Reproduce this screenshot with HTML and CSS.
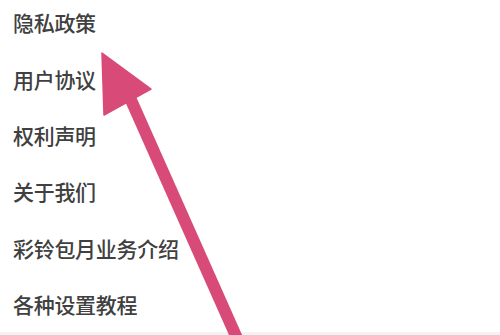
FILE: index.html
```html
<!DOCTYPE html>
<html lang="zh">
<head>
<meta charset="utf-8">
<link rel="stylesheet" href="styles.css">
</head>
<body>
<div class="page">
  <ul class="menu">
    <li class="item">隐私政策</li>
    <li class="item">用户协议</li>
    <li class="item">权利声明</li>
    <li class="item">关于我们</li>
    <li class="item">彩铃包月业务介绍</li>
    <li class="item">各种设置教程</li>
  </ul>
  <div class="footer-band"></div>
  <svg class="arrow" width="500" height="335" viewBox="0 0 500 335">
    <line x1="131" y1="100" x2="240" y2="345" stroke="#d84a78" stroke-width="12"/>
    <polygon points="102,53 151,89 104,115" fill="#d84a78" stroke="#d84a78" stroke-width="1.5" stroke-linejoin="round"/>
  </svg>
</div>
</body>
</html>
```

FILE: styles.css
```css
html, body {
  margin: 0;
  padding: 0;
  background: #ffffff;
  overflow: hidden;
}
.page {
  position: relative;
  width: 500px;
  height: 335px;
  overflow: hidden;
}
.menu {
  list-style: none;
  margin: -5.7px 0 0 0;
  padding: 0;
}
.item {
  height: 56.3px;
  display: flex;
  align-items: center;
  padding-left: 13px;
  font-family: "Noto Sans CJK SC", "Noto Sans", sans-serif;
  font-size: 21px;
  font-weight: 500;
  color: #404040;
  letter-spacing: -0.3px;
}
.footer-band {
  height: 20px;
  background: linear-gradient(#f4f4f4, #ececec);
}
.arrow {
  position: absolute;
  left: 0;
  top: 0;
}
```
